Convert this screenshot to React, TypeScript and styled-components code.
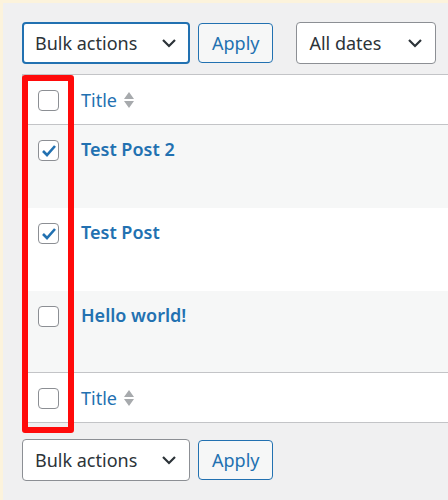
import React from "react";
import styled, { createGlobalStyle } from "styled-components";

const G = createGlobalStyle`
  html,body{margin:0;padding:0;}
  body{background:#f0f0f1;font-family:"Noto Sans","Open Sans",sans-serif;width:448px;height:500px;overflow:hidden;}
`;
const Page = styled.div`
  position:relative;height:500px;width:448px;overflow:hidden;box-sizing:border-box;
  border-left:3px solid #fcf3dc;border-top:3px solid #fcf3dc;
  padding:19px 0 0 19px;
`;
const Bar = styled.div`display:flex;align-items:center;gap:8px;height:42px;`;
const Spacer = styled.span`width:7px;`;
const Select = styled.div<{ w: number; focus?: boolean }>`
  box-sizing:border-box;width:${p => p.w}px;height:42px;background:#fff;border-radius:4px;flex:none;
  border:${p => (p.focus ? "2px solid #2271b1" : "1px solid #8c8f94")};
  display:flex;align-items:center;justify-content:space-between;padding:0 ${p => (p.focus ? 11 : 12)}px;
  font-size:18px;color:#2c3338;
`;
const Btn = styled.div`
  box-sizing:border-box;height:40px;padding:0 13px;border:1px solid #2271b1;border-radius:4px;
  background:#f6f7f7;color:#2271b1;font-size:18px;display:flex;align-items:center;flex:none;
`;
const Table = styled.div`
  margin:10px 0 16px;width:460px;background:#fff;border:1px solid #c3c4c7;
`;
const Row = styled.div<{ h: number; alt?: boolean; top?: boolean; bottom?: boolean }>`
  display:flex;align-items:${p => (p.top ? "flex-start" : "center")};height:${p => p.h}px;
  background:${p => (p.alt ? "#f6f7f7" : "#fff")};
  border-bottom:${p => (p.bottom ? "1px solid #c3c4c7" : "none")};
  box-sizing:border-box;padding-top:${p => (p.top ? 13 : 0)}px;
`;
const Cb = styled.div`
  box-sizing:border-box;width:21px;height:21px;margin:2px 22px 0 15px;border:1px solid #8c8f94;
  border-radius:4px;background:#fff;display:flex;align-items:center;justify-content:center;flex:none;
`;
const Head = styled.span`color:#2271b1;font-size:18px;display:flex;align-items:center;gap:6px;`;
const PostT = styled.span`color:#2271b1;font-size:18px;font-weight:600;line-height:22px;`;
const Red = styled.div`
  position:absolute;left:19px;top:72px;width:52px;height:358px;box-sizing:border-box;
  border:6px solid #ff0a0a;border-radius:3px;
`;
const Chev = () => (
  <svg width="16" height="10" viewBox="0 0 16 10"><path d="M2 2l6 6 6-6" fill="none" stroke="#2c3338" strokeWidth="2.2" /></svg>
);
const Sort = () => (
  <svg width="12" height="20" viewBox="0 0 12 20"><path d="M6 2l5 7H1z M6 18l5-7H1z" fill="#a7aaad" /></svg>
);
const Check = () => (
  <svg width="16" height="14" viewBox="0 0 16 14"><path d="M2 7l4 4 8-9" fill="none" stroke="#2271b1" strokeWidth="2.6" /></svg>
);

export default function App() {
  return (
    <Page>
      <G />
      <Bar>
        <Select w={168} focus>Bulk actions<Chev /></Select>
        <Btn>Apply</Btn>
        <Spacer />
        <Select w={140}>All dates<Chev /></Select>
      </Bar>
      <Table>
        <Row h={50} bottom><Cb /><Head>Title<Sort /></Head></Row>
        <Row h={83} alt top><Cb><Check /></Cb><PostT>Test Post 2</PostT></Row>
        <Row h={83} top><Cb><Check /></Cb><PostT>Test Post</PostT></Row>
        <Row h={82} alt top bottom><Cb /><PostT>Hello world!</PostT></Row>
        <Row h={49}><Cb /><Head>Title<Sort /></Head></Row>
      </Table>
      <Bar>
        <Select w={168}>Bulk actions<Chev /></Select>
        <Btn>Apply</Btn>
      </Bar>
      <Red />
    </Page>
  );
}
